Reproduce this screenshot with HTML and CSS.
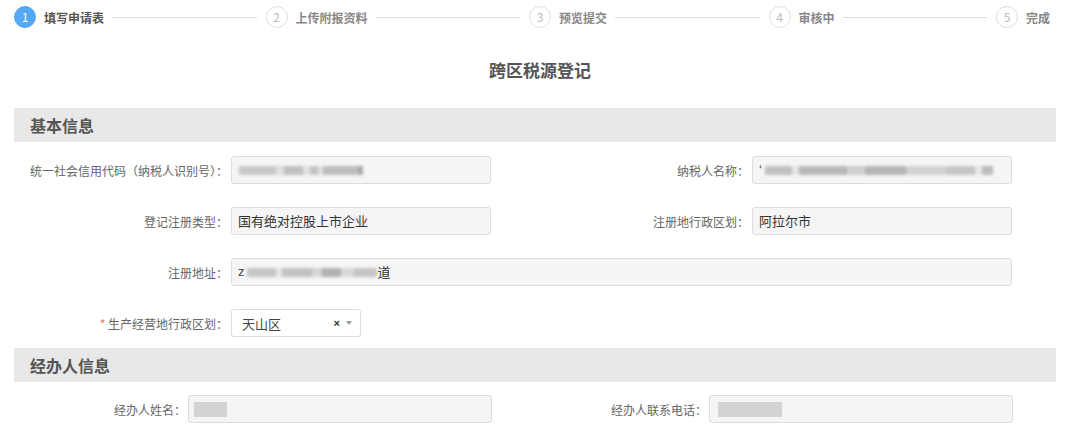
FILE: index.html
```html
<!DOCTYPE html>
<html lang="zh-CN">

<head>
  <meta charset="UTF-8" />
  <meta name="viewport" content="width=device-width, initial-scale=1.0" />
  <title>跨区税源登记</title>
  <link rel="stylesheet" href="styles.css">
</head>

<body>

  <!-- 步骤条 -->
  <div class="steps">
    <div class="step active"><span class="num">1</span><span class="txt">填写申请表</span></div>
    <div class="line"></div>
    <div class="step"><span class="num">2</span><span class="txt">上传附报资料</span></div>
    <div class="line"></div>
    <div class="step"><span class="num">3</span><span class="txt">预览提交</span></div>
    <div class="line"></div>
    <div class="step"><span class="num">4</span><span class="txt">审核中</span></div>
    <div class="line"></div>
    <div class="step"><span class="num">5</span><span class="txt">完成</span></div>
  </div>

  <h1 class="title">跨区税源登记</h1>

  <!-- 基本信息 -->
  <div class="section">
    <div class="section-head">基本信息</div>
    <div class="section-body">
      <div class="row">
        <div class="field">
          <label>统一社会信用代码（纳税人识别号）：</label>
          <div class="input"><span class="blur blur-code"></span></div>
        </div>
        <div class="field">
          <label>纳税人名称：</label>
          <div class="input"><span class="ch">‘</span><span class="blur blur-name"></span></div>
        </div>
      </div>
      <div class="row">
        <div class="field">
          <label>登记注册类型：</label>
          <div class="input">国有绝对控股上市企业</div>
        </div>
        <div class="field">
          <label>注册地行政区划：</label>
          <div class="input">阿拉尔市</div>
        </div>
      </div>
      <div class="row">
        <div class="field wide">
          <label>注册地址：</label>
          <div class="input"><span class="ch">z</span><span class="blur blur-addr"></span><span>道</span></div>
        </div>
      </div>
      <div class="row last">
        <div class="field">
          <label><em>*</em> 生产经营地行政区划：</label>
          <div class="select">
            <span class="val">天山区</span>
            <span class="clear">×</span>
            <span class="caret"></span>
          </div>
        </div>
      </div>
    </div>
  </div>

  <!-- 经办人信息 -->
  <div class="section narrow">
    <div class="section-head">经办人信息</div>
    <div class="section-body">
      <div class="row">
        <div class="field">
          <label>经办人姓名：</label>
          <div class="input"><span class="mask mask-name"></span></div>
        </div>
        <div class="field">
          <label>经办人联系电话：</label>
          <div class="input"><span class="mask mask-tel"></span></div>
        </div>
      </div>
    </div>
  </div>

</body>

</html>
```

FILE: styles.css
```css
/* 基础 */
* {
  margin: 0;
  padding: 0;
  box-sizing: border-box;
}

body {
  font-family: "Noto Sans CJK SC", "Noto Sans", sans-serif;
  background: #fff;
  color: #333;
  width: 1080px;
  height: 434px;
  overflow: hidden;
}

/* 步骤条 */
.steps {
  display: flex;
  align-items: center;
  height: 34px;
  padding: 0 30px 0 14px;
}

.step {
  display: flex;
  align-items: center;
  flex-shrink: 0;
}

.step .num {
  width: 22px;
  height: 22px;
  border-radius: 50%;
  border: 1px solid #ddd;
  color: #bbb;
  font-size: 12px;
  line-height: 20px;
  text-align: center;
  margin-right: 8px;
}

.step .txt {
  font-size: 12px;
  font-weight: bold;
  color: #888;
}

.step.active .num {
  background: #55a9f4;
  border-color: #55a9f4;
  color: #fff;
}

.step.active .txt {
  color: #555;
}

.line {
  flex: 1;
  height: 1px;
  background: #dcdcdc;
  margin: 0 9px 0 8px;
}

/* 标题 */
.title {
  font-size: 17px;
  font-weight: bold;
  color: #555;
  text-align: center;
  line-height: 24px;
  margin-top: 24px;
}

/* 分组 */
.section {
  margin: 0 24px 0 14px;
}

.title + .section {
  margin-top: 26px;
}

.section-head {
  height: 34px;
  line-height: 34px;
  background: #e8e8e8;
  padding-left: 16px;
  font-size: 16px;
  font-weight: bold;
  color: #555;
}

.section-body {
  padding-top: 14px;
}

.narrow .section-body {
  padding-top: 13px;
}

.row {
  display: flex;
  margin-bottom: 23px;
}

.row.last {
  margin-bottom: 11px;
}

.field {
  flex: 1;
  display: flex;
  align-items: center;
}

.field label {
  width: 217px;
  flex-shrink: 0;
  text-align: right;
  padding-right: 3px;
  font-size: 12px;
  color: #666;
}

.narrow .field label {
  width: 174px;
  padding-right: 2px;
}

.field label em {
  font-style: normal;
  color: #f07350;
}

.input {
  width: 260px;
  height: 28px;
  background: #f5f5f5;
  border: 1px solid #dcdcdc;
  border-radius: 3px;
  padding-left: 6px;
  font-size: 13px;
  line-height: 26px;
  color: #333;
  display: flex;
  align-items: center;
}

.narrow .input {
  width: 304px;
}

.field.wide .input {
  width: auto;
  flex: 1;
  margin-right: 44px;
}

.ch {
  font-family: "Liberation Sans", sans-serif;
  color: #444;
}

/* 打码的内容 */
.blur {
  display: inline-block;
  height: 9px;
  filter: blur(1.8px);
}

.blur-code {
  width: 124px;
  margin-left: 1px;
  background: linear-gradient(to right,
      #c8c8c8 0, #c8c8c8 30%, #dedede 30%, #dedede 36%,
      #bfbfbf 36%, #bfbfbf 52%, #e0e0e0 52%, #e0e0e0 57%,
      #c4c4c4 57%, #c4c4c4 64%, #e0e0e0 64%, #e0e0e0 68%,
      #bdbdbd 68%, #bdbdbd 96%, #a8a8a8 96%);
}

.blur-name {
  width: 228px;
  margin-left: 3px;
  background: linear-gradient(to right,
      #c0c0c0 0, #c0c0c0 12%, #e6e6e6 12%, #e6e6e6 15%,
      #b8b8b8 15%, #b8b8b8 36%, #cfcfcf 36%, #cfcfcf 44%,
      #b5b5b5 44%, #b5b5b5 62%, #d2d2d2 62%, #d2d2d2 80%,
      #c6c6c6 80%, #c6c6c6 92%, #e6e6e6 92%, #e6e6e6 95%, #bcbcbc 95%);
}

.blur-addr {
  width: 130px;
  margin: 0 1px 0 2px;
  background: linear-gradient(to right,
      #c6c6c6 0, #c6c6c6 22%, #e4e4e4 22%, #e4e4e4 27%,
      #c2c2c2 27%, #c2c2c2 50%, #d6d6d6 50%, #d6d6d6 58%,
      #b2b2b2 58%, #b2b2b2 72%, #d8d8d8 72%, #d8d8d8 82%,
      #c4c4c4 82%, #c4c4c4 100%);
}

.mask {
  display: inline-block;
  height: 15px;
  background: #d3d3d3;
}

.mask-name {
  width: 33px;
  margin-left: -1px;
}

.mask-tel {
  width: 64px;
  margin-left: 2px;
}

/* 下拉框 */
.select {
  width: 130px;
  height: 28px;
  background: #fff;
  border: 1px solid #dcdcdc;
  border-radius: 3px;
  display: flex;
  align-items: center;
  padding: 0 8px 0 10px;
}

.select .val {
  flex: 1;
  font-size: 13px;
  color: #444;
}

.select .clear {
  font-family: "Liberation Sans", sans-serif;
  font-size: 11px;
  font-weight: bold;
  color: #333;
  margin-right: 6px;
}

.select .caret {
  width: 0;
  height: 0;
  border-left: 3px solid transparent;
  border-right: 3px solid transparent;
  border-top: 4px solid #999;
}
```
